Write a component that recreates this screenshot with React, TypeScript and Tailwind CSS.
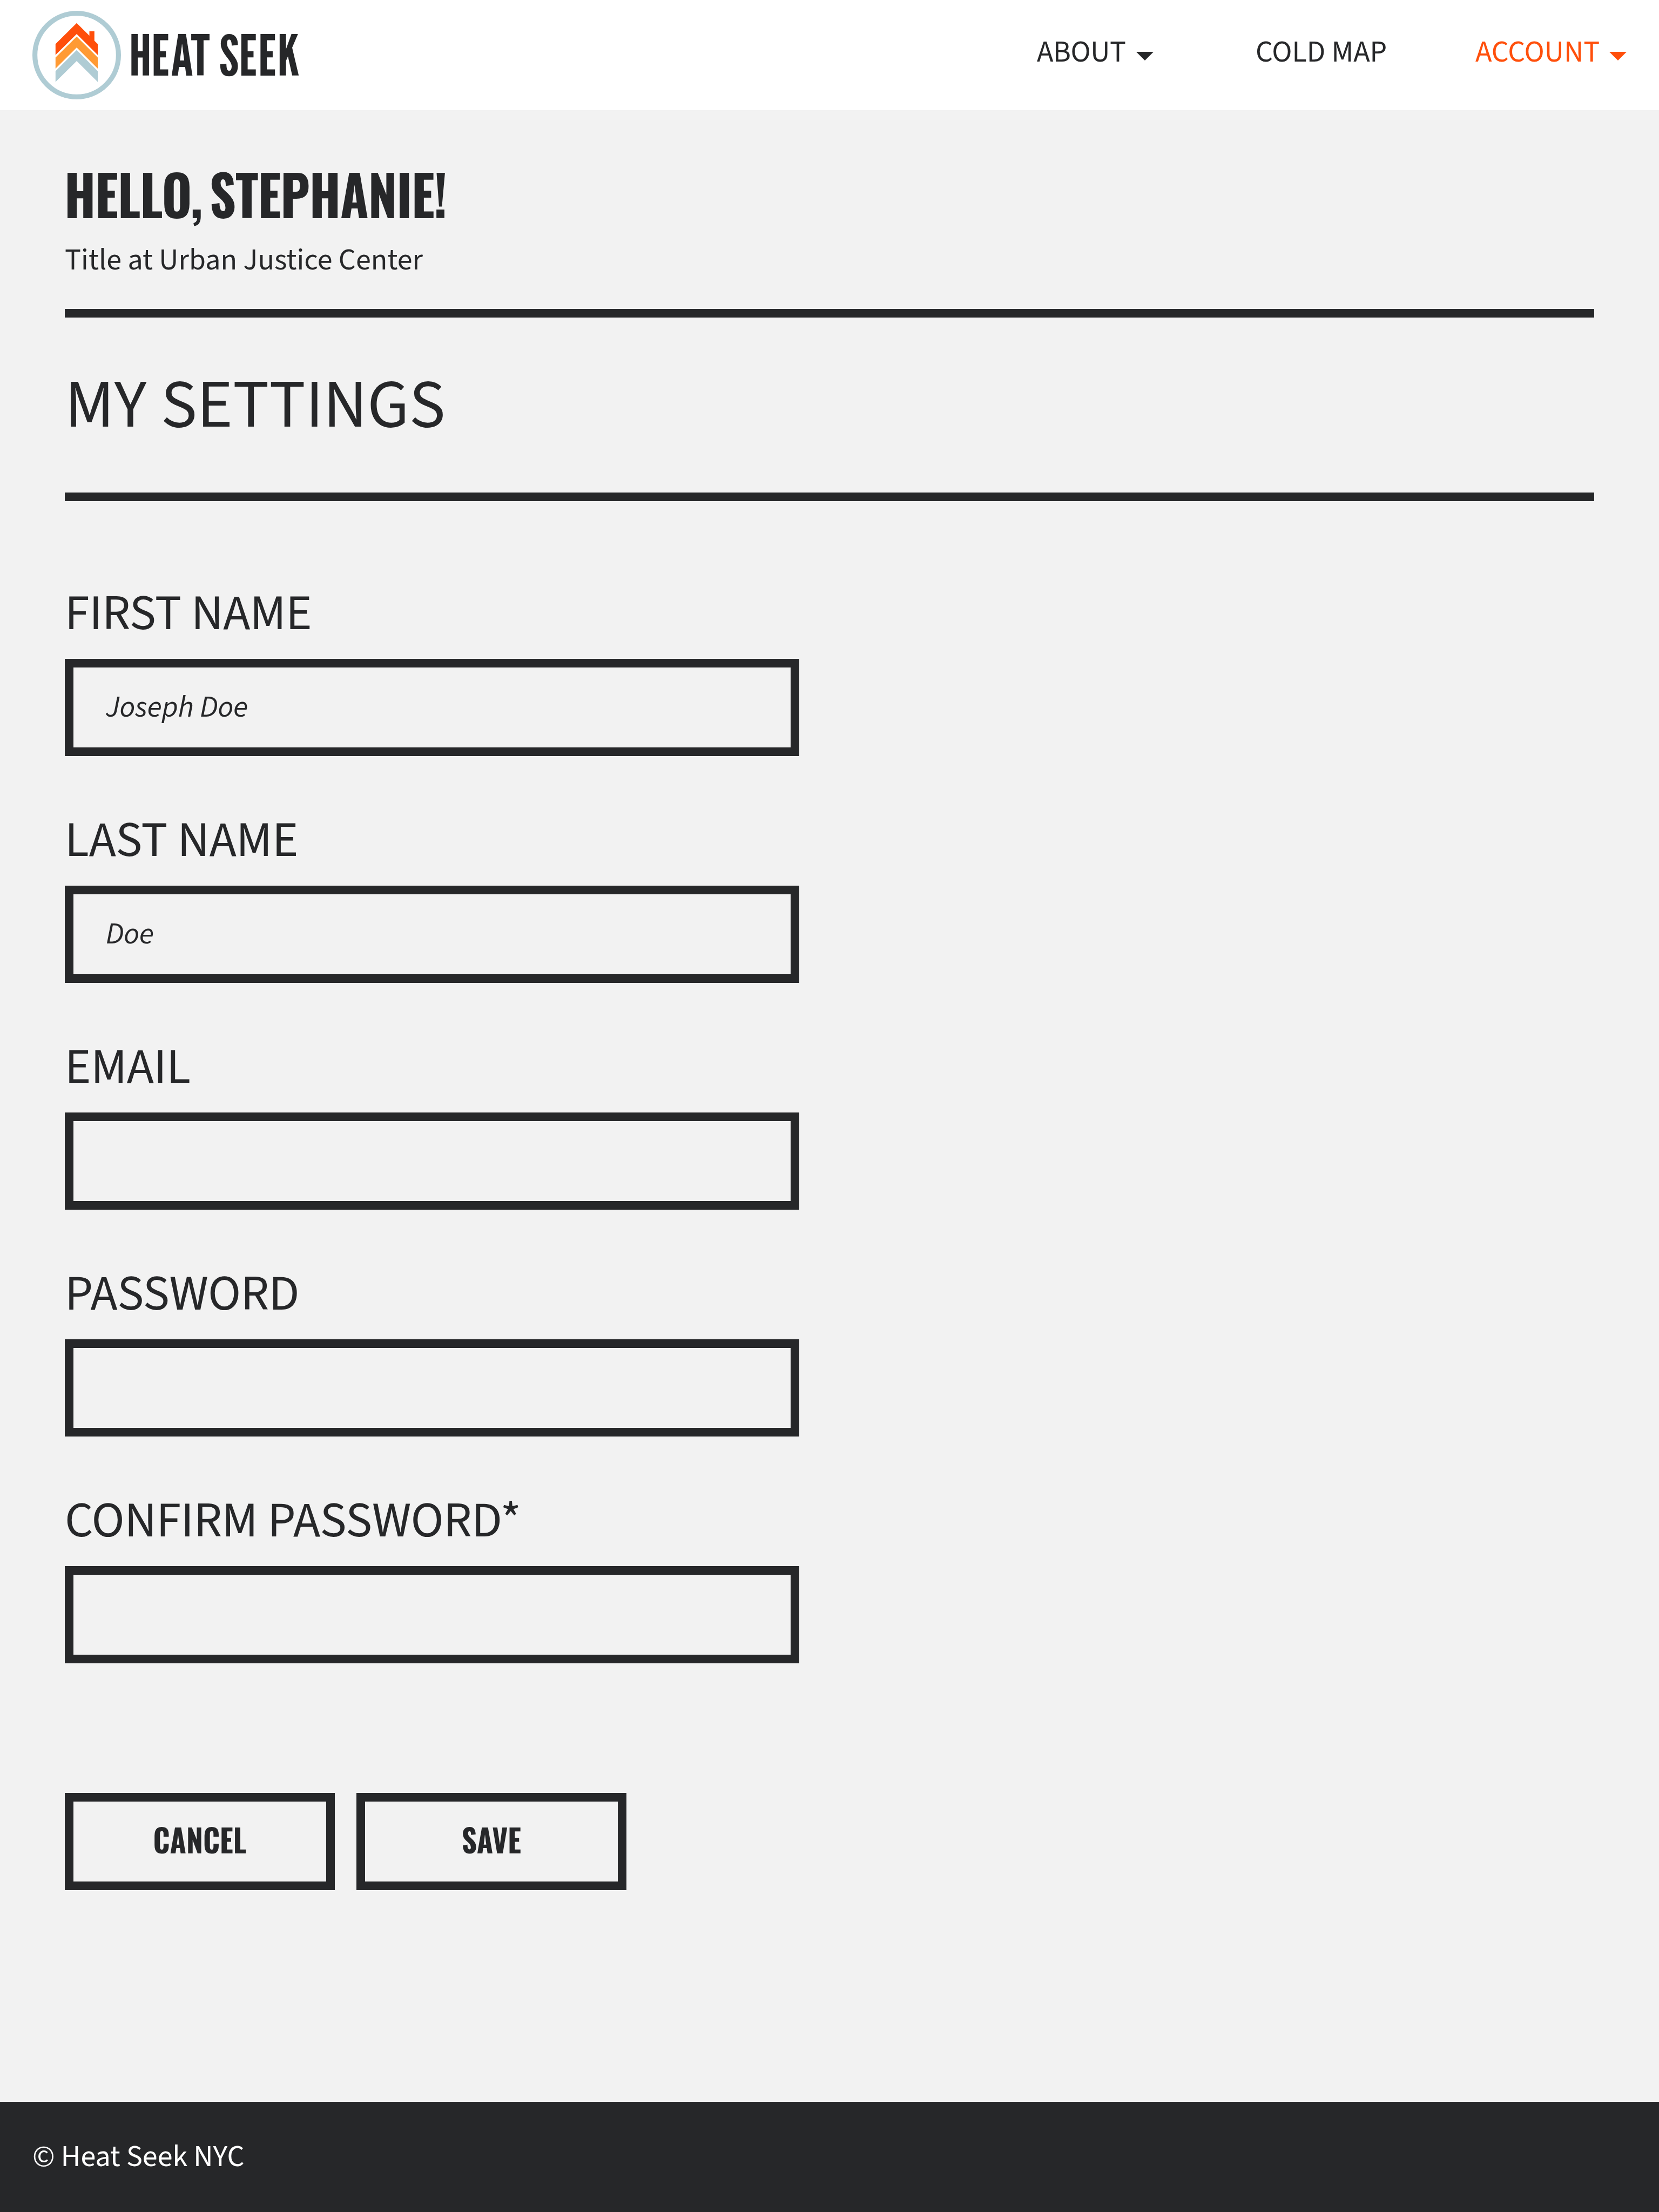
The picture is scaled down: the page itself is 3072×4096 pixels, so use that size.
function Caret({ className }: { className: string }) {
  return (
    <svg viewBox="0 0 32 16" className={`mt-[15px] h-4 w-8 ${className}`} aria-hidden="true">
      <path d="M0 0H32L16 16Z" fill="currentColor" />
    </svg>
  );
}

function Logo() {
  return (
    <div className="flex items-center">
      <svg viewBox="0 0 164 164" className="h-[164px] w-[164px]" aria-hidden="true">
        <circle cx="82" cy="82" r="77.4" fill="#fff" stroke="#afccd4" strokeWidth="9.2" />
        <path d="M82 22.7L105.5 46V38H114.8V55.5L121 61.5V81.8L82 43L42.8 81.8V61.5Z" fill="#ff4f0b" />
        <path d="M82 47.8L121 86.6V107L82 68L42.8 107V86.6Z" fill="#ff9a33" />
        <path d="M82 72.8L121 111.8V131.7L82 93L42.8 131.7V111.8Z" fill="#afccd4" />
      </svg>
      <span className="ml-[15px] origin-left scale-x-[1.05] font-['League_Gothic','Oswald',sans-serif] text-[103.5px] leading-[120px] whitespace-nowrap">
        HEAT SEEK
      </span>
    </div>
  );
}

const fields = [
  { label: "FIRST NAME", value: "Joseph Doe" },
  { label: "LAST NAME", value: "Doe" },
  { label: "EMAIL", value: "" },
  { label: "PASSWORD", value: "" },
  { label: "CONFIRM PASSWORD*", value: "" },
];

export default function App() {
  return (
    <div className="flex h-[4096px] w-[3072px] flex-col bg-[#f2f2f2] font-['Source_Sans_3','Noto_Sans_CJK_SC',sans-serif] text-[56px] leading-[72px] text-[#262729]">
      <header className="flex h-[204px] items-center justify-between bg-white px-[60px]">
        <Logo />
        <nav className="flex items-center pb-[11px] whitespace-nowrap">
          <a className="flex w-[216px] items-center justify-between tracking-[-0.4px]">
            ABOUT <Caret className="text-[#262729]" />
          </a>
          <a className="ml-[189px] w-[244px]">COLD MAP</a>
          <a className="ml-[163px] flex w-[280px] items-center justify-between text-[#ff4f0b]">
            ACCOUNT <Caret className="text-[#ff4f0b]" />
          </a>
        </nav>
      </header>

      <main className="flex grow flex-col px-[120px] pt-[103px]">
        <h1 className="-ml-px origin-left scale-x-[0.92] self-start font-['Oswald','League_Gothic',sans-serif] text-[104px] leading-[100px] font-bold tracking-[-1.15px] whitespace-nowrap [word-spacing:-11px]">
          HELLO, STEPHANIE!
        </h1>
        <p className="mt-[39px] tracking-[0.08px]">Title at Urban Justice Center</p>
        <hr className="mt-[54px] h-4 border-0 bg-[#262729]" />
        <h2 className="mt-[101px] text-[126px] leading-[124px] tracking-[-0.2px] [word-spacing:1.5px]">MY SETTINGS</h2>
        <hr className="mt-[99px] h-4 border-0 bg-[#262729]" />

        <form className="mt-[159px] flex flex-col">
          <div className="flex w-[1360px] flex-col gap-[107px]">
            {fields.map((field) => (
              <label key={field.label} className="flex flex-col">
                <span className="text-[92px] leading-[100px] tracking-[-0.3px]">{field.label}</span>
                <input
                  type="text"
                  defaultValue={field.value}
                  className="mt-[33px] h-[180px] border-[16px] border-[#262729] bg-transparent px-[60px] pb-[2px] italic outline-none"
                />
              </label>
            ))}
          </div>
          <div className="mt-[240px] flex gap-10 font-['Oswald','League_Gothic',sans-serif] text-[60px] font-bold">
            <button type="button" className="h-[180px] w-[500px] border-[16px] border-[#262729] pb-[10px]">
              <span className="inline-block scale-x-[0.92]">CANCEL</span>
            </button>
            <button type="button" className="h-[180px] w-[500px] border-[16px] border-[#262729] pb-[10px]">
              <span className="inline-block scale-x-[0.92]">SAVE</span>
            </button>
          </div>
        </form>
      </main>

      <footer className="flex h-[204px] items-center bg-[#262729] px-[60px] text-white">© Heat Seek NYC</footer>
    </div>
  );
}
